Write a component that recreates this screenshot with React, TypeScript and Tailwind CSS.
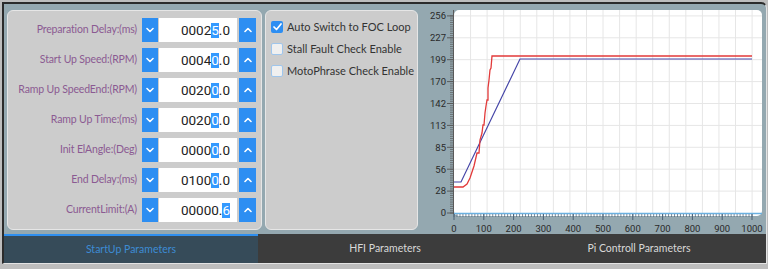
import React from 'react';

const ui = { fontFamily: 'Lato, "Noto Sans", sans-serif' };
const num = { fontFamily: 'Roboto, "Noto Sans", sans-serif' };

type Param = { label: string; head: string; sel: string; tail: string };

const params: Param[] = [
  { label: 'Preparation Delay:(ms)', head: '0002', sel: '5', tail: '.0' },
  { label: 'Start Up Speed:(RPM)', head: '0004', sel: '0', tail: '.0' },
  { label: 'Ramp Up SpeedEnd:(RPM)', head: '0020', sel: '0', tail: '.0' },
  { label: 'Ramp Up Time:(ms)', head: '0020', sel: '0', tail: '.0' },
  { label: 'Init ElAngle:(Deg)', head: '0000', sel: '0', tail: '.0' },
  { label: 'End Delay:(ms)', head: '0100', sel: '0', tail: '.0' },
  { label: 'CurrentLimit:(A)', head: '00000.', sel: '6', tail: '' },
];

const checks = [
  { label: 'Auto Switch to FOC Loop', on: true },
  { label: 'Stall Fault Check Enable', on: false },
  { label: 'MotoPhrase Check Enable', on: false },
];

function Chevron({ up }: { up?: boolean }) {
  return (
    <svg width="8" height="6" viewBox="0 0 8 6">
      <polyline
        points={up ? '1,4.5 4,1.5 7,4.5' : '1,1.5 4,4.5 7,1.5'}
        fill="none"
        stroke="white"
        strokeWidth="1.6"
        strokeLinecap="round"
        strokeLinejoin="round"
      />
    </svg>
  );
}

function SpinRow({ p }: { p: Param }) {
  return (
    <div className="flex h-[30px] items-center justify-end pr-[5px]">
      <span className="whitespace-nowrap text-[10.5px] tracking-[-0.15px] text-[#8b5a92]" style={ui}>
        {p.label}
      </span>
      <button className="ml-[5px] flex h-[24px] w-[16px] items-center justify-center bg-[#2d8ef2]">
        <Chevron />
      </button>
      <div
        className="ml-[1px] flex h-[24px] w-[78px] items-center justify-end bg-white pr-[7px] text-[13.5px] text-[#222]"
        style={num}
      >
        <span>{p.head}</span>
        <span className="inline-block h-[15px] bg-[#3399ff] leading-[15px] text-white">{p.sel}</span>
        <span>{p.tail}</span>
      </div>
      <button className="ml-[2px] flex h-[24px] w-[17px] items-center justify-center bg-[#2d8ef2]">
        <Chevron up />
      </button>
    </div>
  );
}

function CheckRow({ label, on }: { label: string; on: boolean }) {
  return (
    <div className="flex h-[22px] items-center pl-[5px]">
      {on ? (
        <span className="flex h-[12px] w-[12px] shrink-0 items-center justify-center rounded-[2px] bg-[#2d8ef2]">
          <svg width="9" height="8" viewBox="0 0 9 8">
            <polyline
              points="1,4 3.5,6.5 8,1"
              fill="none"
              stroke="white"
              strokeWidth="1.7"
              strokeLinecap="round"
              strokeLinejoin="round"
            />
          </svg>
        </span>
      ) : (
        <span className="h-[12px] w-[12px] shrink-0 rounded-[2px] border border-[#9fc6ec] bg-[#f0f0f0]" />
      )}
      <span className="ml-[4px] whitespace-nowrap text-[11px] text-[#333]" style={ui}>
        {label}
      </span>
    </div>
  );
}

// plot mapping, svg coordinates
const X = (u: number) => 34 + u * 0.298;

const blue = '34,178 41,178 100,55 332,55';
const red =
  '34,183 43,183 47,180 50,174 54,162 57,149 59,149 60,136 62,129 63,121 64,121 65,109 66,102 67,96 68,96 68,84 69,76 70,66 71,64 72,52 332,52';

function Chart() {
  const yLabels = [0, 28, 56, 85, 113, 142, 170, 199, 227, 256];
  const yMajor = yLabels.map((_, i) => 209 - i * 21.9);
  const yMinor = Array.from({ length: 91 }, (_, i) => 209 - i * 2.19);
  const xMinor = Array.from({ length: 101 }, (_, i) => X(i * 10));
  const xMajor = Array.from({ length: 11 }, (_, i) => i * 100);
  const vGrid = Array.from({ length: 18 }, (_, i) => 34 + (i + 1) * 16.56);

  return (
    <svg width="344" height="230" className="ml-[2px] shrink-0" style={num}>
      <rect x="34" y="6" width="308" height="206" rx="5" fill="white" />
      {vGrid.map((x) => (
        <line key={'v' + x} x1={x} y1="6" x2={x} y2="209" stroke="#e6e6e6" strokeWidth="1" />
      ))}
      {yMajor.slice(1).map((y) => (
        <line key={'h' + y} x1="34" y1={y} x2="342" y2={y} stroke="#e6e6e6" strokeWidth="1" />
      ))}
      <line x1="33.5" y1="6" x2="33.5" y2="210" stroke="#5a5a5a" strokeWidth="1" />
      {yMinor.map((y) => (
        <line key={'ym' + y} x1="30" y1={y} x2="33" y2={y} stroke="#5a5a5a" strokeWidth="0.7" />
      ))}
      {yMajor.map((y) => (
        <line key={'yM' + y} x1="27" y1={y} x2="33" y2={y} stroke="#5a5a5a" strokeWidth="1" />
      ))}
      {yLabels.map((v, i) => (
        <text key={'yl' + v} x="26" y={yMajor[i] + 3.3} fontSize="9.5" fill="#2a2a2a" textAnchor="end">
          {v}
        </text>
      ))}
      <line x1="34" y1="209.5" x2="342" y2="209.5" stroke="#6ab0e0" strokeWidth="1.4" />
      {xMinor.map((x) => (
        <line key={'xm' + x} x1={x} y1="210" x2={x} y2="213" stroke="#4a6075" strokeWidth="0.7" />
      ))}
      {xMajor.map((u) => (
        <line key={'xM' + u} x1={X(u)} y1="210" x2={X(u)} y2="216" stroke="#4a6075" strokeWidth="1" />
      ))}
      {xMajor.map((u) => (
        <text key={'xl' + u} x={X(u)} y="228" fontSize="9.5" fill="#2a2a2a" textAnchor="middle">
          {u}
        </text>
      ))}
      <polyline points={blue} fill="none" stroke="#4747a8" strokeWidth="1.2" />
      <polyline points={red} fill="none" stroke="#e23a3a" strokeWidth="1.3" />
    </svg>
  );
}

export default function App() {
  return (
    <div className="h-[269px] w-[768px] bg-[#bdbdbd] pl-[2px] pt-[2px]">
      <div className="flex h-[262px] w-[765px] flex-col overflow-hidden rounded-tr-[6px] border-b border-l-2 border-r border-t-2 border-b-[#e4e4e4] border-l-[#2b2b2b] border-r-[#e4e4e4] border-t-[#2b2b2b] bg-[#94a8b0]">
        <div className="flex h-[230px]">
          <div className="flex gap-[3px] pl-[3px] pt-[6px]">
            <div className="h-[220px] w-[255px] rounded-[6px] border border-[#e6e6e6] bg-[#cccccc] pt-[4px]">
              {params.map((p) => (
                <SpinRow key={p.label} p={p} />
              ))}
            </div>
            <div className="h-[220px] w-[153px] rounded-[6px] border border-[#e6e6e6] bg-[#cccccc] pt-[5px]">
              {checks.map((c) => (
                <CheckRow key={c.label} label={c.label} on={c.on} />
              ))}
            </div>
          </div>
          <Chart />
        </div>
        <div className="flex h-[29px] text-[10.5px]" style={ui}>
          <div className="flex flex-1 items-center justify-center border-t-2 border-[#2e8ff0] bg-[#364b59] text-[#3d8bd4]">
            StartUp Parameters
          </div>
          <div className="flex flex-1 items-center justify-center bg-[#3c3c3c] text-[#d8d8d8]">
            HFI Parameters
          </div>
          <div className="flex flex-1 items-center justify-center bg-[#3c3c3c] text-[#d8d8d8]">
            Pi Controll Parameters
          </div>
        </div>
      </div>
    </div>
  );
}
